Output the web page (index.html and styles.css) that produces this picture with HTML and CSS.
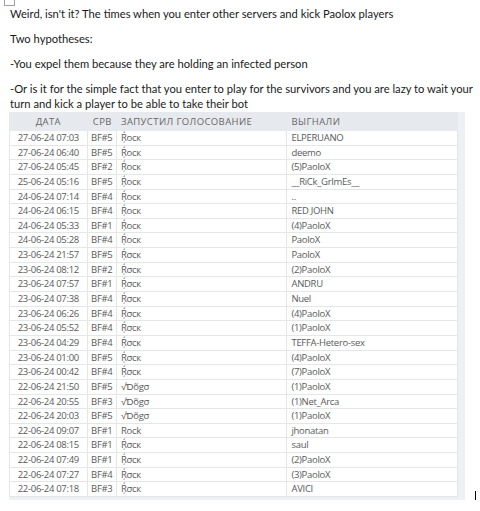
FILE: index.html
```html
<!DOCTYPE html>
<html>
<head>
<meta charset="utf-8">
<link rel="stylesheet" href="styles.css">
</head>
<body>
<div class="post">
  <div class="broken-img"></div>
  <p>Weird, isn't it? The times when you enter other servers and kick Paolox players</p>
  <p>Two hypotheses:</p>
  <p>-You expel them because they are holding an infected person</p>
  <p class="last">-Or is it for the simple fact that you enter to play for the survivors and you are lazy to wait your turn and kick a player to be able to take their bot</p>
  <div class="shot-row">
    <div class="panel">
      <table class="votes">
        <thead>
          <tr><th class="c-date">ДАТА</th><th class="c-srv">СРВ</th><th class="c-by">ЗАПУСТИЛ ГОЛОСОВАНИЕ</th><th class="c-kick">ВЫГНАЛИ</th></tr>
        </thead>
        <tbody>
          <tr><td class="c-date">27-06-24 07:03</td><td class="c-srv">BF#5</td><td class="c-by">Ŗ́ocк</td><td class="c-kick">ELPERUANO</td></tr>
          <tr><td class="c-date">27-06-24 06:40</td><td class="c-srv">BF#5</td><td class="c-by">Ŗ́ocк</td><td class="c-kick">deemo</td></tr>
          <tr><td class="c-date">27-06-24 05:45</td><td class="c-srv">BF#2</td><td class="c-by">Ŗ́ocк</td><td class="c-kick">(5)PaoloX</td></tr>
          <tr><td class="c-date">25-06-24 05:16</td><td class="c-srv">BF#5</td><td class="c-by">Ŗ́ocк</td><td class="c-kick">__RiCk_GrImEs__</td></tr>
          <tr><td class="c-date">24-06-24 07:14</td><td class="c-srv">BF#4</td><td class="c-by">Ŗ́ocк</td><td class="c-kick">..</td></tr>
          <tr><td class="c-date">24-06-24 06:15</td><td class="c-srv">BF#4</td><td class="c-by">Ŗ́ocк</td><td class="c-kick">RED JOHN</td></tr>
          <tr><td class="c-date">24-06-24 05:33</td><td class="c-srv">BF#1</td><td class="c-by">Ŗ́ocк</td><td class="c-kick">(4)PaoloX</td></tr>
          <tr><td class="c-date">24-06-24 05:28</td><td class="c-srv">BF#4</td><td class="c-by">Ŗ́ocк</td><td class="c-kick">PaoloX</td></tr>
          <tr><td class="c-date">23-06-24 21:57</td><td class="c-srv">BF#5</td><td class="c-by">Ŗ́σcк</td><td class="c-kick">PaoloX</td></tr>
          <tr><td class="c-date">23-06-24 08:12</td><td class="c-srv">BF#2</td><td class="c-by">Ŗ́σcк</td><td class="c-kick">(2)PaoloX</td></tr>
          <tr><td class="c-date">23-06-24 07:57</td><td class="c-srv">BF#1</td><td class="c-by">Ŗ́σcк</td><td class="c-kick">ANDRU</td></tr>
          <tr><td class="c-date">23-06-24 07:38</td><td class="c-srv">BF#4</td><td class="c-by">Ŗ́σcк</td><td class="c-kick">Nuel</td></tr>
          <tr><td class="c-date">23-06-24 06:26</td><td class="c-srv">BF#4</td><td class="c-by">Ŗ́σcк</td><td class="c-kick">(4)PaoloX</td></tr>
          <tr><td class="c-date">23-06-24 05:52</td><td class="c-srv">BF#4</td><td class="c-by">Ŗ́σcк</td><td class="c-kick">(1)PaoloX</td></tr>
          <tr><td class="c-date">23-06-24 04:29</td><td class="c-srv">BF#4</td><td class="c-by">Ŗ́σcк</td><td class="c-kick">TEFFA-Hetero-sex</td></tr>
          <tr><td class="c-date">23-06-24 01:00</td><td class="c-srv">BF#5</td><td class="c-by">Ŗ́σcк</td><td class="c-kick">(4)PaoloX</td></tr>
          <tr><td class="c-date">23-06-24 00:42</td><td class="c-srv">BF#4</td><td class="c-by">Ŗ́σcк</td><td class="c-kick">(7)PaoloX</td></tr>
          <tr><td class="c-date">22-06-24 21:50</td><td class="c-srv">BF#5</td><td class="c-by">√Ɗõgσ</td><td class="c-kick">(1)PaoloX</td></tr>
          <tr><td class="c-date">22-06-24 20:55</td><td class="c-srv">BF#3</td><td class="c-by">√Ɗõgσ</td><td class="c-kick">(1)Net_Arca</td></tr>
          <tr><td class="c-date">22-06-24 20:03</td><td class="c-srv">BF#5</td><td class="c-by">√Ɗõgσ</td><td class="c-kick">(1)PaoloX</td></tr>
          <tr><td class="c-date">22-06-24 09:07</td><td class="c-srv">BF#1</td><td class="c-by">Rock</td><td class="c-kick">jhonatan</td></tr>
          <tr><td class="c-date">22-06-24 08:15</td><td class="c-srv">BF#1</td><td class="c-by">Ŗ́σcк</td><td class="c-kick">saul</td></tr>
          <tr><td class="c-date">22-06-24 07:49</td><td class="c-srv">BF#1</td><td class="c-by">Ŗ́σcк</td><td class="c-kick">(2)PaoloX</td></tr>
          <tr><td class="c-date">22-06-24 07:27</td><td class="c-srv">BF#4</td><td class="c-by">Ŗ́σcк</td><td class="c-kick">(3)PaoloX</td></tr>
          <tr><td class="c-date">22-06-24 07:18</td><td class="c-srv">BF#3</td><td class="c-by">Ŗ́σcк</td><td class="c-kick">AVICI</td></tr>
        </tbody>
      </table>
    </div>
    <span class="caret"></span>
  </div>
</div>
</body>
</html>
```
FILE: styles.css
```css
html, body {
  margin: 0;
  padding: 0;
  background: #ffffff;
}
body {
  font-family: Lato, "Open Sans", sans-serif;
  color: #1a1a1a;
}
.post {
  padding: 0 3px 0 9px;
}
.broken-img {
  width: 9px;
  height: 5px;
  margin-left: -5px;
  border: 1px solid #a0a0a0;
  border-top: none;
}
.post p {
  margin: 0 0 10px 1px;
  font-size: 11.2px;
  line-height: 15px;
  letter-spacing: 0;
}
.post p.last {
  margin-bottom: 1px;
}
.shot-row {
  display: flex;
  align-items: flex-end;
  gap: 10px;
}
.panel {
  flex-shrink: 0;
  background: #eef1f4;
  padding: 0 7px 3px 0;
}
.votes {
  border-collapse: separate;
  border-spacing: 0;
  table-layout: fixed;
  width: 449px;
  font-family: "Open Sans", sans-serif;
  font-size: 9.5px;
  letter-spacing: -0.3px;
  color: #5a5a5a;
}
.votes th {
  background: #e6eaee;
  font-weight: normal;
  color: #666;
  height: 19px;
  padding: 0 4px;
  letter-spacing: 0.4px;
  white-space: nowrap;
}
.votes td {
  background: #fff;
  height: 13.64px;
  line-height: 13.64px;
  padding: 0 4px;
  border-bottom: 1px solid #e4e6e8;
  border-right: 1px solid #e4e6e8;
  white-space: nowrap;
  overflow: hidden;
}
.votes td:first-child {
  border-left: 1px solid #e4e6e8;
}
.votes .c-date { width: 70px; text-align: center; }
.votes .c-srv { width: 23px; text-align: center; padding: 0 3px; }
.votes .c-by { width: 161px; text-align: left; }
.votes .c-kick { width: 161px; text-align: left; }
.caret {
  flex-shrink: 0;
  width: 1px;
  height: 9px;
  background: #000;
}
```
